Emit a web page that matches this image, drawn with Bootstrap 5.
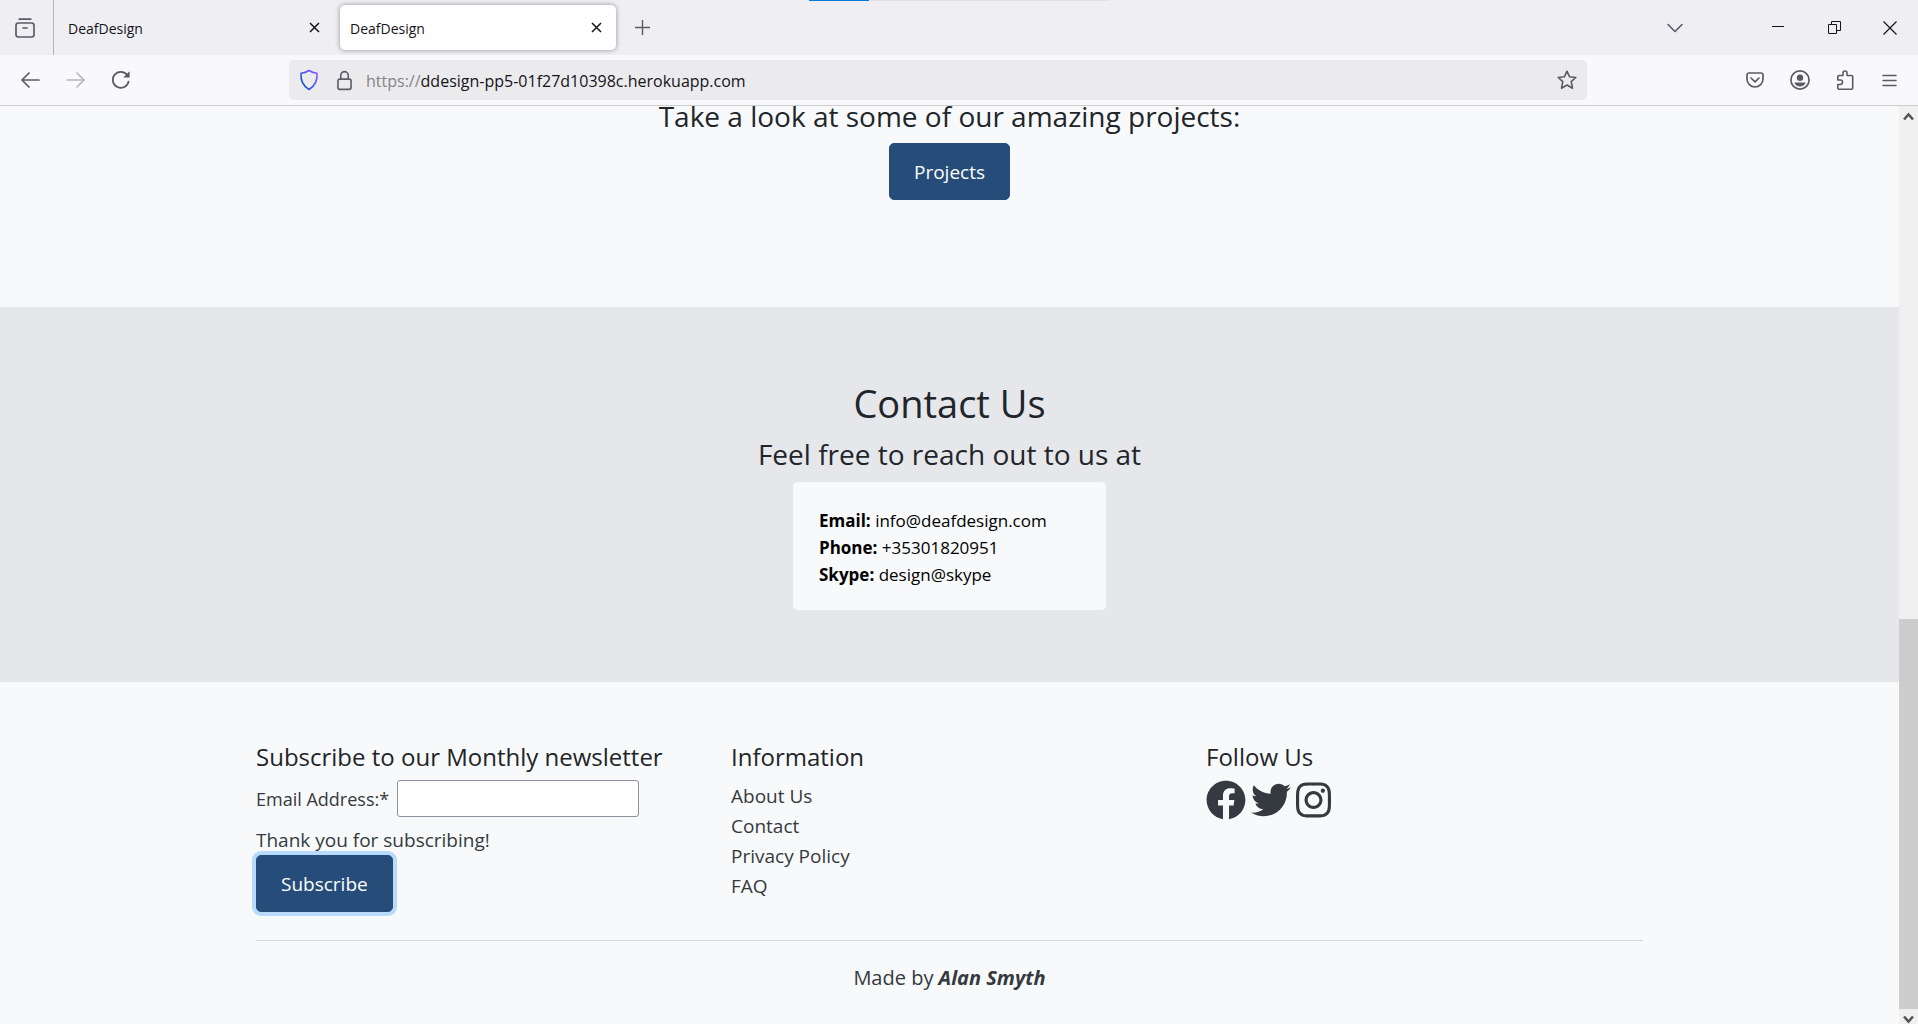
<!DOCTYPE html>
<html lang="en">
<head>
<meta charset="utf-8">
<meta name="viewport" content="width=device-width, initial-scale=1">
<title>DeafDesign</title>
<link href="https://cdn.jsdelivr.net/npm/bootstrap@5.3.0/dist/css/bootstrap.min.css" rel="stylesheet">
<style>
  body { font-family: "Open Sans", "Noto Sans", sans-serif; font-size: 19px; line-height: 30px; color: #343a40; background: #f8f9fb; }
  svg { display: block; }

  /* browser window */
  .tabstrip { height: 55px; background: #efeef3; color: #15141a; font-size: 14px; line-height: 20px; }
  .chrome-btn { display: flex; align-items: center; justify-content: center; flex: none; width: 45px; height: 40px; padding: 0; border: 0; background: none; color: #5b5b66; }
  .win-btn { width: 56px; color: #15141a; }
  .tabs-menu { width: 54px; height: 55px; padding-right: 4px; border-right: 1px solid #b4b3ba; }
  .browser-tab { width: 276px; height: 45px; padding: 0 10px; border-radius: 5px; }
  .browser-tab span { padding-top: 2px; }
  .browser-tab.idle { margin-right: 10px; padding: 0 6px 0 14px; }
  .browser-tab.current { background: #fff; box-shadow: 0 0 5px rgba(0, 0, 0, .4); }
  .tab-close { width: 20px; height: 20px; color: #15141a; }
  .list-tabs { margin-right: 53px; }
  .loadbar { top: 0; left: 809px; width: 301px; height: 1px; background: #e3e3e3; }
  .loadbar-done { width: 20%; height: 1px; background: #0078d7; }
  .addressrow { height: 51px; background: #f9f9fb; border-bottom: 1px solid #cccccf; padding: 0 6px 0 2px; }
  .nav-btns { width: 287px; }
  .urlbox { height: 40px; margin-right: 145px; border-radius: 5px; background: #ebebed; }
  .urltext { padding: 2px 0 0 14px; font-size: 16px; line-height: 24px; color: #15141a; white-space: nowrap; text-decoration: none; }
  .urltext span { color: #85848a; }

  /* scrollbar */
  .scroller { width: 19px; background: #f0f0f0; color: #606060; }
  .scroll-thumb { background: #cdcdcd; flex: 390 0 0; }
  .scroll-rest { flex: 498 0 0; }
  .scroll-btn { height: 15px; padding: 0; border: 0; background: none; color: #555; }

  /* page */
  .page { background: #f8f9fb; }
  .page h2, .page h3, .page h4 { color: #212529; font-weight: 400; margin: 0; }
  .page h2 { font-size: 38px; line-height: 48px; }
  .page h3 { font-size: 28px; line-height: 36px; }
  .page h4 { font-size: 24px; line-height: 30px; }
  .wrap { max-width: 1425px; padding: 0 19px; }
  .wrap .row { --bs-gutter-x: 38px; }
  .projects { height: 201px; flex: none; }
  .page .projects h3 { margin-top: -8px; margin-bottom: 9px; }
  .btn-brand { --bs-btn-bg: #264d79; --bs-btn-color: #fff; --bs-btn-border-color: #264d79; --bs-btn-hover-bg: #1d3d61; --bs-btn-hover-color: #fff; --bs-btn-font-size: 19px; --bs-btn-line-height: 30px; --bs-btn-border-radius: 5px; padding: 13px 24px 12px; }
  .btn-brand.is-focused { box-shadow: 0 0 0 4px #b8dafd; }
  .contact { background: #e5e7eb; padding: 72px 0; }
  .page .contact h3 { margin: 9px 0 10px; }
  .contact-card { width: 313px; margin: 0 auto; padding: 25px 26px 22px; border-radius: 5px; background: #f8f9fb; color: #000; font-size: 17px; line-height: 27px; text-align: left; }
  .foot { padding-top: 60px; }
  .foot a { color: #343a40; text-decoration: none; }
  .foot label { font-size: 18px; }
  .mail-input { width: 242px; height: 37px; border: 1px solid #8f8f9d; border-radius: 3px; background: #fff; }
  .info-links { margin-top: 9px; }
  .social { gap: 5px; }
  .foot hr { margin: 28px 0 22px; border-top: 1px solid #c9cbcf; opacity: .7; }
  .credit { font-size: 20px; }
</style>
</head>
<body class="vh-100 d-flex flex-column overflow-hidden">

<header class="flex-shrink-0">
  <div class="tabstrip d-flex align-items-center position-relative">
    <div class="loadbar position-absolute"><div class="loadbar-done"></div></div>
    <button class="chrome-btn tabs-menu" aria-label="Firefox View">
      <svg width="20" height="20" viewBox="0 0 20 20" fill="none" stroke="currentColor" stroke-width="1.7" stroke-linecap="round"><path d="M4.2 1.2h11.6"/><rect x="1" y="5" width="18" height="14" rx="2.4"/><path d="M8 10h4"/></svg>
    </button>
    <div class="browser-tab idle d-flex align-items-center justify-content-between">
      <span>DeafDesign</span>
      <button class="chrome-btn tab-close" aria-label="Close tab"><svg width="11" height="11" viewBox="0 0 11 11" stroke="currentColor" stroke-width="1.5"><path d="M1 1l9 9M10 1l-9 9"/></svg></button>
    </div>
    <div class="browser-tab current d-flex align-items-center justify-content-between">
      <span>DeafDesign</span>
      <button class="chrome-btn tab-close" aria-label="Close tab"><svg width="11" height="11" viewBox="0 0 11 11" stroke="currentColor" stroke-width="1.5"><path d="M1 1l9 9M10 1l-9 9"/></svg></button>
    </div>
    <button class="chrome-btn ms-1" aria-label="New tab"><svg width="15" height="15" viewBox="0 0 15 15" stroke="currentColor" stroke-width="1.4"><path d="M7.5 0v15M0 7.5h15"/></svg></button>
    <button class="chrome-btn list-tabs ms-auto" aria-label="List all tabs"><svg width="16" height="10" viewBox="0 0 16 10" fill="none" stroke="currentColor" stroke-width="1.6" stroke-linecap="round" stroke-linejoin="round"><path d="M1 1.5l7 7 7-7"/></svg></button>
    <button class="chrome-btn win-btn" aria-label="Minimize"><svg width="12" height="3" viewBox="0 0 12 3"><path d="M0 0h12v1H0z" fill="currentColor"/></svg></button>
    <button class="chrome-btn win-btn" aria-label="Restore"><svg width="13" height="13" viewBox="0 0 13 13" fill="none" stroke="currentColor"><path d="M.5 3.5h8v9h-8zM3.5 3.5v-3h9v9h-4"/></svg></button>
    <button class="chrome-btn win-btn" aria-label="Close"><svg width="14" height="14" viewBox="0 0 14 14" stroke="currentColor" stroke-width="1.2"><path d="M.5 .5l13 13M13.5 .5l-13 13"/></svg></button>
  </div>

  <div class="addressrow d-flex align-items-center">
    <div class="nav-btns d-flex flex-shrink-0 ps-2">
      <button class="chrome-btn" aria-label="Back"><svg class="me-1" width="19" height="16" viewBox="0 0 19 16" fill="none" stroke="currentColor" stroke-width="1.7" stroke-linecap="round" stroke-linejoin="round"><path d="M18 8H1.2M8 1L1 8l7 7"/></svg></button>
      <button class="chrome-btn" aria-label="Forward" disabled><svg class="me-1 opacity-50" width="19" height="16" viewBox="0 0 19 16" fill="none" stroke="#77767f" stroke-width="1.7" stroke-linecap="round" stroke-linejoin="round"><path d="M1 8h16.8M11 1l7 7-7 7"/></svg></button>
      <button class="chrome-btn" aria-label="Reload"><svg class="me-1" width="20" height="20" viewBox="0 0 20 20" fill="none" stroke="currentColor" stroke-width="1.7" stroke-linecap="round"><path d="M17.6 11.5A8 8 0 1 1 16 4.8"/><path d="M18.6 1.2v6.4h-6.4z" fill="currentColor" stroke="none"/></svg></button>
    </div>
    <div class="urlbox d-flex align-items-center flex-grow-1">
      <svg class="ms-2 flex-shrink-0" width="24" height="22" viewBox="0 0 24 22" fill="none"><defs><linearGradient id="sh" x1="1" y1="0" x2="0" y2="1"><stop offset="0" stop-color="#9059ff"/><stop offset=".6" stop-color="#3a56e0"/><stop offset="1" stop-color="#0250bb"/></linearGradient></defs><path d="M12 1.500c2.600 1.700 5.200 2.500 8 2.700.5 7.300-1.800 12.600-8 16.300C5.800 16.800 3.500 11.500 4 4.200c2.800-.2 5.400-1 8-2.700z" stroke="url(#sh)" stroke-width="1.600" stroke-linejoin="round"/></svg>
      <svg class="ms-3 flex-shrink-0" width="15" height="21" viewBox="0 0 16 21" fill="none" stroke="#5b5b66" stroke-width="1.7"><rect x="1" y="9" width="14" height="11" rx="2"/><path d="M4 9V5a4 4 0 0 1 8 0v4"/></svg>
      <a class="urltext flex-grow-1" href="#"><span>https://</span>ddesign-pp5-01f27d10398c.herokuapp.com</a>
      <button class="chrome-btn" aria-label="Bookmark this page"><svg class="ms-1" width="20" height="20" viewBox="0 0 20 20" fill="none" stroke="currentColor" stroke-width="1.6" stroke-linejoin="round"><path d="M10 1.200l2.600 5.600 6.200.7-4.600 4.200 1.300 6.500-5.500-3.200-5.500 3.200 1.300-6.500L1.200 7.500l6.200-.7z"/></svg></button>
    </div>
    <button class="chrome-btn" aria-label="Save to Pocket"><svg width="18" height="16" viewBox="0 0 18 16" fill="none" stroke="currentColor" stroke-width="1.700" stroke-linecap="round" stroke-linejoin="round"><path d="M3 1h12a2 2 0 0 1 2 2v4A8 8 0 0 1 1 7V3a2 2 0 0 1 2-2z"/><path d="M5 6l4 3.800L13 6"/></svg></button>
    <button class="chrome-btn" aria-label="Account"><svg width="20" height="20" viewBox="0 0 20 20" fill="none"><circle cx="10" cy="10" r="9.100" stroke="currentColor" stroke-width="1.700"/><circle cx="10" cy="7.700" r="3.200" fill="currentColor"/><path d="M4.700 12.500h10.600a1 1 0 0 1 0 1c-2 4-8.600 4-10.600 0a1 1 0 0 1 0-1z" fill="currentColor"/></svg></button>
    <button class="chrome-btn" aria-label="Extensions"><svg width="18" height="20" viewBox="0 0 18 20" fill="none" stroke="currentColor" stroke-width="1.600" stroke-linejoin="round"><path d="M3 5.500h4V3a2 2 0 0 1 4 0v2.500h4.500a1.200 1.200 0 0 1 1.200 1.200V18a1.200 1.200 0 0 1-1.200 1.200H3A1.200 1.200 0 0 1 1.800 18v-3.500h2.500a2.200 2.200 0 0 0 0-4.500H1.800V6.700A1.200 1.200 0 0 1 3 5.500z"/></svg></button>
    <button class="chrome-btn" aria-label="Menu"><svg width="15" height="13" viewBox="0 0 15 13" stroke="currentColor" stroke-width="1.500" stroke-linecap="round"><path d="M1 1.500h13M1 6.500h13M1 11.500h13"/></svg></button>
  </div>
</header>

<div class="d-flex flex-grow-1 overflow-hidden">
  <main class="page flex-grow-1 overflow-hidden d-flex flex-column">
    <section class="projects text-center">
      <h3>Take a look at some of our amazing projects:</h3>
      <a class="btn btn-brand" href="#">Projects</a>
    </section>

    <section class="contact text-center">
      <h2>Contact Us</h2>
      <h3>Feel free to reach out to us at</h3>
      <div class="contact-card">
        <div><strong>Email:</strong> info@deafdesign.com</div>
        <div><strong>Phone:</strong> +35301820951</div>
        <div><strong>Skype:</strong> design@skype</div>
      </div>
    </section>

    <footer class="foot">
      <div class="container-fluid wrap">
        <div class="row">
          <div class="col-4">
            <h4>Subscribe to our Monthly newsletter</h4>
            <form>
              <div class="d-flex align-items-center gap-2 mt-2 mb-2">
                <label for="email">Email Address:*</label>
                <input class="mail-input" id="email" type="email">
              </div>
              <div>Thank you for subscribing!</div>
              <button class="btn btn-brand is-focused" type="button">Subscribe</button>
            </form>
          </div>
          <div class="col-4">
            <h4>Information</h4>
            <ul class="list-unstyled info-links mb-0">
              <li><a href="#">About Us</a></li>
              <li><a href="#">Contact</a></li>
              <li><a href="#">Privacy Policy</a></li>
              <li><a href="#">FAQ</a></li>
            </ul>
          </div>
          <div class="col-4">
            <h4>Follow Us</h4>
            <div class="social d-flex mt-2">
              <a href="#" aria-label="Facebook"><svg width="40" height="40" viewBox="0 0 512 512" fill="currentColor"><path d="M504 256C504 119 393 8 256 8S8 119 8 256c0 123.780 90.690 226.380 209.250 245V327.690h-63V256h63v-54.640c0-62.150 37-96.480 93.670-96.480 27.140 0 55.520 4.840 55.520 4.840v61h-31.280c-30.800 0-40.410 19.120-40.410 38.730V256h68.780l-11 71.690h-57.780V501C413.310 482.380 504 379.780 504 256z"/></svg></a>
              <a href="#" aria-label="Twitter"><svg width="40" height="40" viewBox="0 0 512 512" fill="currentColor"><path d="M459.370 151.716c.325 4.548.325 9.097.325 13.645 0 138.720-105.583 298.558-298.558 298.558-59.452 0-114.680-17.219-161.137-47.106 8.447.974 16.568 1.299 25.340 1.299 49.055 0 94.213-16.568 130.274-44.832-46.132-.975-84.792-31.188-98.112-72.772 6.498.974 12.995 1.624 19.818 1.624 9.421 0 18.843-1.300 27.614-3.573-48.081-9.747-84.143-51.980-84.143-102.985v-1.299c13.969 7.797 30.214 12.670 47.431 13.319-28.264-18.843-46.781-51.005-46.781-87.391 0-19.492 5.197-37.360 14.294-52.954 51.655 63.675 129.300 105.258 216.365 109.807-1.624-7.797-2.599-15.918-2.599-24.040 0-57.828 46.782-104.934 104.934-104.934 30.213 0 57.502 12.670 76.670 33.137 23.715-4.548 46.456-13.320 66.599-25.340-7.798 24.366-24.366 44.833-46.132 57.827 21.117-2.273 41.584-8.122 60.426-16.243-14.292 20.791-32.161 39.308-52.628 54.253z"/></svg></a>
              <a href="#" aria-label="Instagram"><svg width="35" height="40" viewBox="0 0 448 512" fill="currentColor"><path d="M224.100 141c-63.600 0-114.900 51.300-114.900 114.900s51.300 114.900 114.900 114.900S339 319.500 339 255.900 287.700 141 224.100 141zm0 189.600c-41.100 0-74.700-33.500-74.700-74.700s33.500-74.700 74.700-74.700 74.700 33.500 74.700 74.700-33.600 74.700-74.700 74.700zm146.400-194.300c0 14.900-12 26.800-26.800 26.800-14.900 0-26.800-12-26.800-26.800s12-26.800 26.800-26.800 26.800 12 26.800 26.800zm76.100 27.200c-1.700-35.900-9.900-67.700-36.200-93.900-26.200-26.200-58-34.400-93.900-36.200-37-2.100-147.900-2.100-184.900 0-35.800 1.700-67.600 9.900-93.900 36.100s-34.400 58-36.200 93.900c-2.100 37-2.100 147.900 0 184.900 1.700 35.900 9.900 67.700 36.200 93.900s58 34.400 93.900 36.200c37 2.100 147.900 2.100 184.900 0 35.900-1.700 67.700-9.900 93.900-36.200 26.200-26.200 34.400-58 36.200-93.900 2.100-37 2.100-147.800 0-184.800zM398.800 388c-7.800 19.600-22.900 34.700-42.600 42.600-29.500 11.700-99.500 9-132.100 9s-102.700 2.600-132.100-9c-19.600-7.800-34.700-22.900-42.600-42.600-11.700-29.500-9-99.500-9-132.100s-2.600-102.700 9-132.100c7.800-19.600 22.900-34.700 42.600-42.600 29.500-11.700 99.500-9 132.100-9s102.700-2.600 132.100 9c19.600 7.800 34.700 22.900 42.600 42.600 11.700 29.500 9 99.500 9 132.100s2.700 102.700-9 132.100z"/></svg></a>
            </div>
          </div>
        </div>
        <hr>
        <p class="credit text-center mb-0">Made by <strong><em>Alan Smyth</em></strong></p>
      </div>
    </footer>
  </main>

  <div class="scroller d-flex flex-column flex-shrink-0" aria-hidden="true">
    <button class="scroll-btn d-flex justify-content-center align-items-end" tabindex="-1"><svg width="11" height="9" viewBox="0 0 11 9" fill="none" stroke="currentColor" stroke-width="2.600"><path d="M1 7.500l4.500-5 4.500 5"/></svg></button>
    <div class="scroll-rest"></div>
    <div class="scroll-thumb"></div>
    <button class="scroll-btn d-flex justify-content-center align-items-end" tabindex="-1"><svg width="11" height="9" viewBox="0 0 11 9" fill="none" stroke="currentColor" stroke-width="2.600"><path d="M1 1.500l4.500 5 4.500-5"/></svg></button>
  </div>
</div>

<script src="https://cdn.jsdelivr.net/npm/bootstrap@5.3.0/dist/js/bootstrap.bundle.min.js"></script>
</body>
</html>
